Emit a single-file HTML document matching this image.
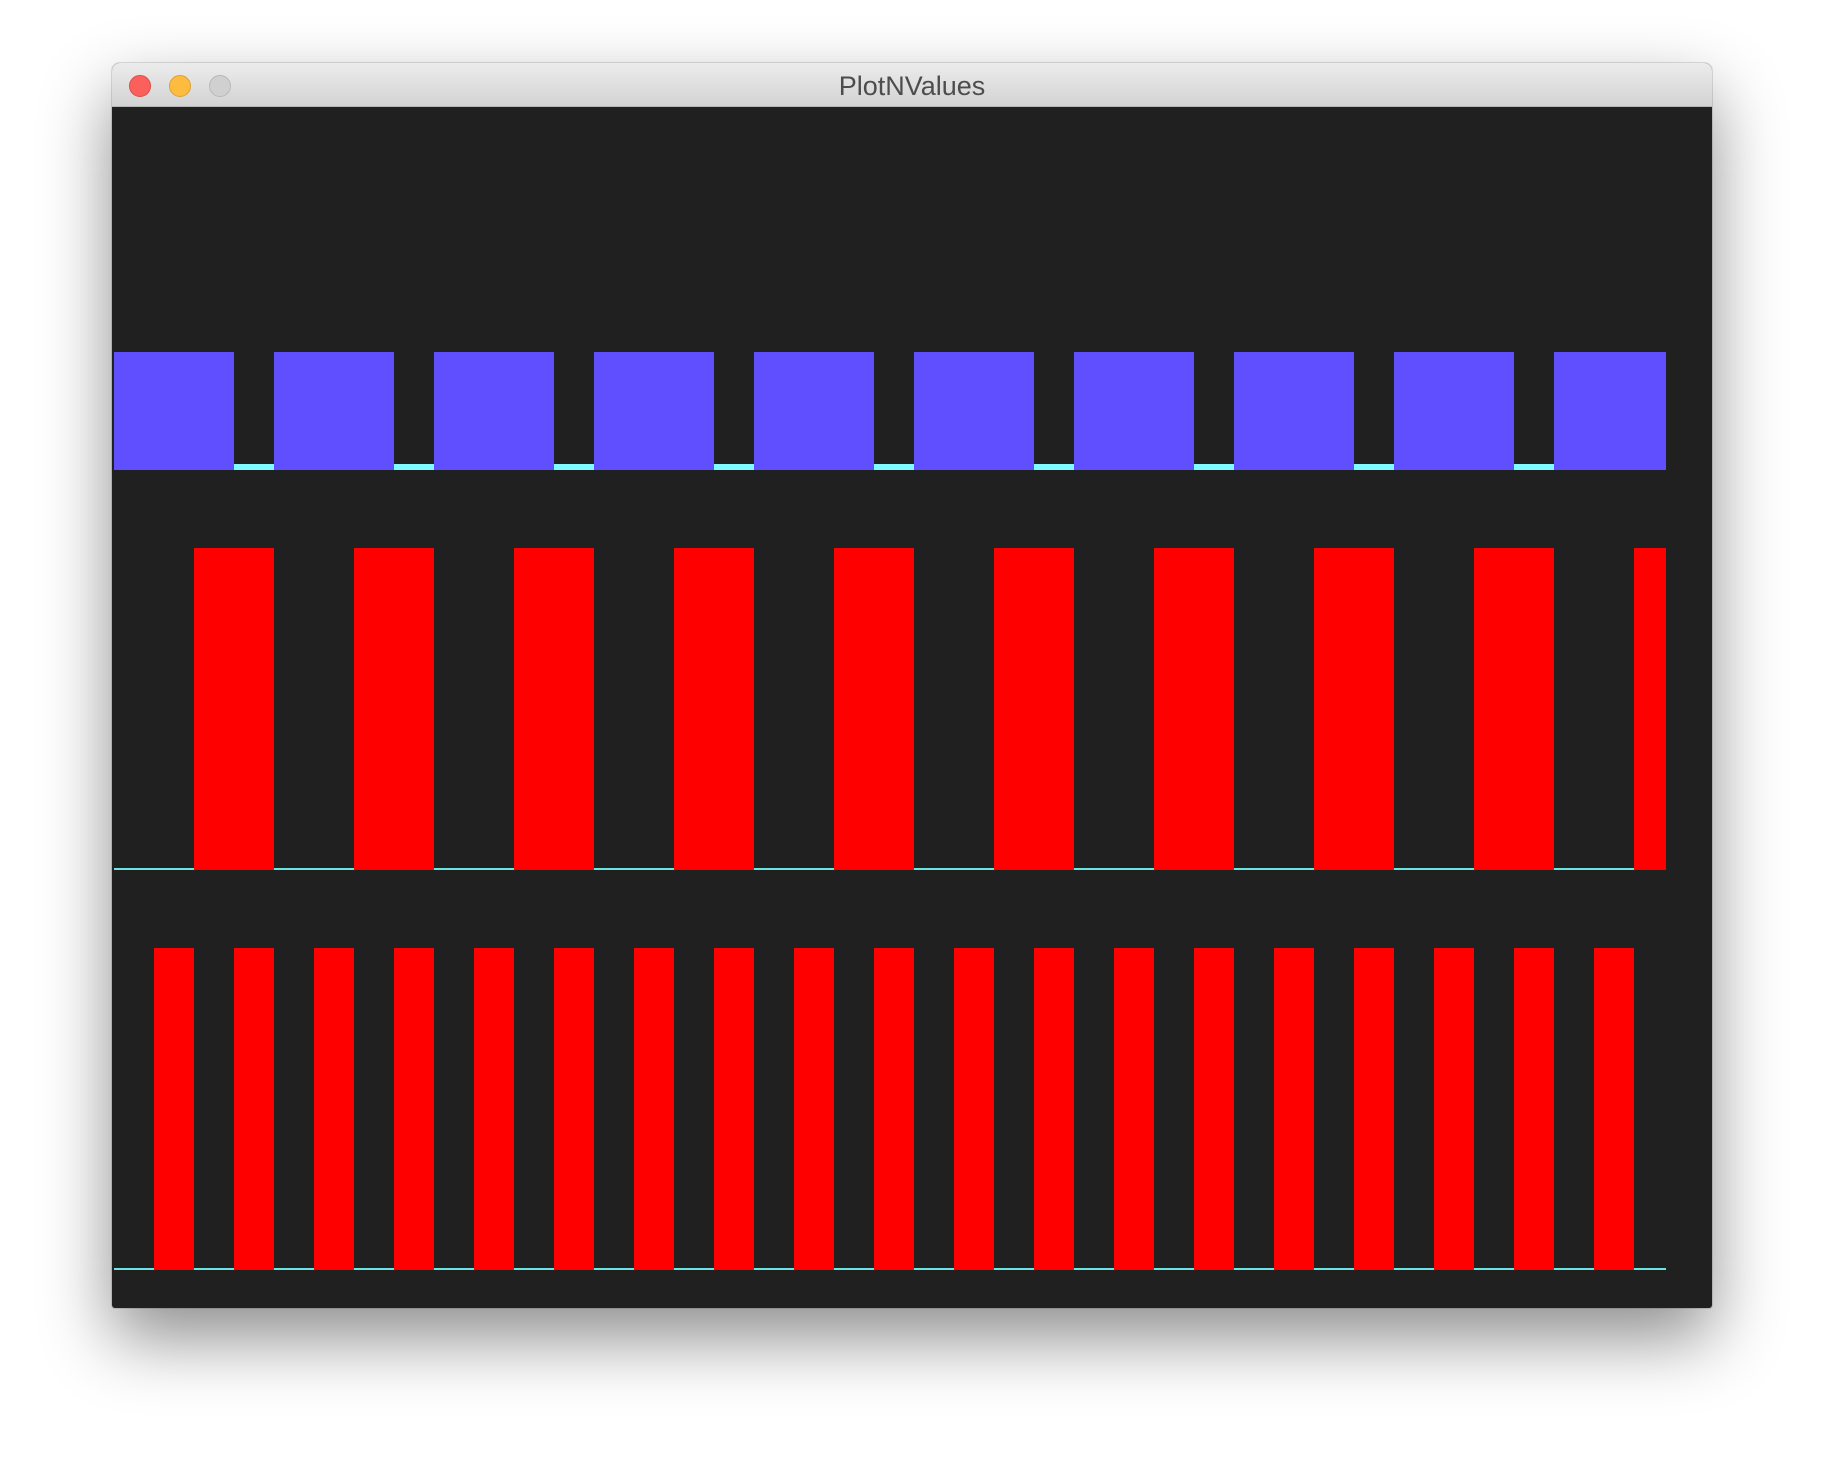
<!DOCTYPE html>
<html><head><meta charset="utf-8"><style>
html,body{margin:0;padding:0;width:1824px;height:1468px;background:#fff;overflow:hidden;position:relative;font-family:"Liberation Sans",sans-serif}
.win{position:absolute;left:112px;top:63px;width:1600px;height:1245px;border-radius:8px 8px 3px 3px;box-shadow:0 30px 70px rgba(0,0,0,.45),0 0 0 1px rgba(0,0,0,.12);background:#202020;overflow:hidden}
.tb{position:absolute;left:0;top:0;width:1600px;height:44px;background:linear-gradient(#ececec,#d3d3d3);border-bottom:1px solid #b5b5b5;box-sizing:border-box}
.tb .t{position:absolute;left:0;right:0;top:8px;text-align:center;font-size:27px;line-height:31px;color:#4d4d4d}
.dot{position:absolute;top:12px;width:22px;height:22px;border-radius:50%;box-sizing:border-box}
.r{position:absolute}
</style></head><body>
<div class="win">
<div class="tb">
<div class="dot" style="left:17px;background:#fc605c;border:1px solid #de4a46"></div>
<div class="dot" style="left:57px;background:#fdbc40;border:1px solid #dea033"></div>
<div class="dot" style="left:97px;background:#d0d0d0;border:1px solid #b8b8b8"></div>
<div class="t">PlotNValues</div>
</div>
</div>
<div id="p"></div>
<script>
var h='';
h+='<div class="r" style="left:114px;top:464px;width:1552px;height:6px;background:#7ffaff"></div>';
h+='<div class="r" style="left:114px;top:868px;width:1552px;height:2px;background:#6ee3e3"></div>';
h+='<div class="r" style="left:114px;top:1268px;width:1552px;height:2px;background:#6ee3e3"></div>';
for(var k=0;k<10;k++){var x=114+160*k,w=Math.min(120,1666-x);
h+='<div class="r" style="left:'+x+'px;top:352px;width:'+w+'px;height:118px;background:#5f4fff"></div>';}
for(var k=0;k<10;k++){var x=194+160*k,w=Math.min(80,1666-x);
h+='<div class="r" style="left:'+x+'px;top:548px;width:'+w+'px;height:322px;background:#ff0000"></div>';}
for(var k=0;k<19;k++){var x=154+80*k;
h+='<div class="r" style="left:'+x+'px;top:948px;width:40px;height:322px;background:#ff0000"></div>';}
document.getElementById('p').innerHTML=h;
</script>
</body></html>
